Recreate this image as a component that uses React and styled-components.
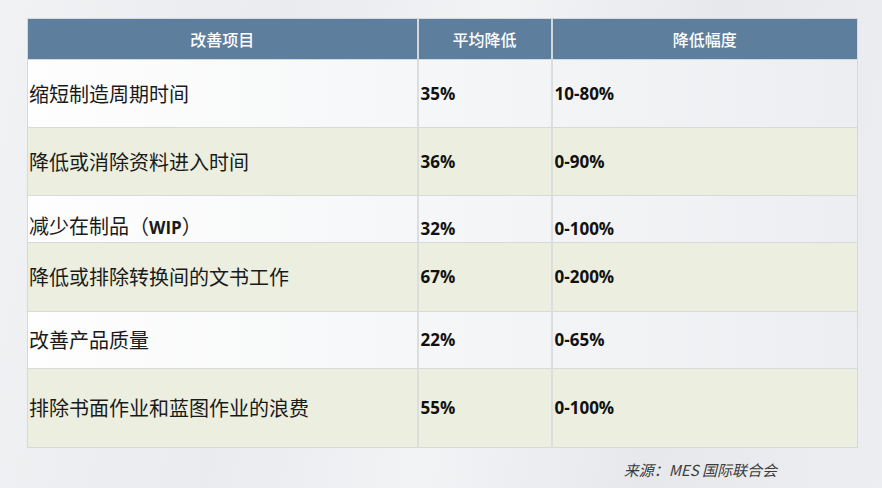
import React from "react";
import styled, { createGlobalStyle } from "styled-components";

const GlobalStyle = createGlobalStyle`
  html, body { margin: 0; padding: 0; }
  body {
    width: 882px;
    height: 488px;
    overflow: hidden;
    font-family: "Noto Sans CJK SC", "Noto Sans", sans-serif;
    background: linear-gradient(100deg, #f1f2f4 0%, #e9ebee 30%, #f2f3f5 52%, #e6e8ec 75%, #eceef1 100%);
  }
`;

const Page = styled.div`
  width: 882px;
  height: 488px;
  box-sizing: border-box;
  padding: 18px 25px 0 27px;
  display: flex;
  flex-direction: column;
`;

const Table = styled.table`
  width: 830px;
  table-layout: fixed;
  border-collapse: collapse;
  border: 1px solid #d6d8da;
`;

const HeadCell = styled.th`
  height: 40px;
  padding: 0;
  background: #5e7e9d;
  color: #ffffff;
  font-family: "Noto Sans CJK SC", sans-serif;
  font-weight: 500;
  font-size: 16px;
  text-align: center;
  vertical-align: middle;
  border-left: 2px solid #d4d7db;
  &:first-child { border-left: none; }
`;

const Row = styled.tr`
  height: ${(p) => p.$h}px;
  background: ${(p) =>
    p.$green
      ? "#ecefdf"
      : "linear-gradient(90deg, #fefefe 0%, #f6f7f8 45%, #eceef1 100%)"};
  border-top: 1px solid #d8d9da;
`;

const Cell = styled.td`
  padding: ${(p) => (p.$end ? "0 0 2px 2px" : "0 0 0 2px")};
  vertical-align: ${(p) => (p.$end ? "bottom" : "middle")};
  border-left: 2px solid #dcdddf;
  color: #111;
  font-family: "Open Sans", "Noto Sans", sans-serif;
  font-weight: 700;
  font-size: 17px;
  line-height: 22px;
`;

const NameCell = styled.td`
  padding: ${(p) => (p.$end ? "0 0 1px 1px" : "0 0 0 1px")};
  vertical-align: ${(p) => (p.$end ? "bottom" : "middle")};
  color: #1a1a1a;
  font-family: "Noto Sans CJK SC", sans-serif;
  font-weight: 400;
  font-size: 20px;
  line-height: 26px;
`;

const Latin = styled.span`
  font-family: "Open Sans", sans-serif;
  font-weight: 700;
  font-size: 17px;
`;

const Source = styled.div`
  display: flex;
  justify-content: flex-end;
  padding-right: 80px;
  margin-top: 12px;
  color: #3c3c3c;
  font-family: "Noto Sans CJK SC", sans-serif;
  font-style: italic;
  font-size: 15px;
  line-height: 20px;
`;

const rows = [
  { name: "缩短制造周期时间", avg: "35%", range: "10-80%", h: 68 },
  { name: "降低或消除资料进入时间", avg: "36%", range: "0-90%", h: 68, green: true },
  { name: "减少在制品（", latin: "WIP", tail: "）", avg: "32%", range: "0-100%", h: 47, end: true },
  { name: "降低或排除转换间的文书工作", avg: "67%", range: "0-200%", h: 69, green: true },
  { name: "改善产品质量", avg: "22%", range: "0-65%", h: 57 },
  { name: "排除书面作业和蓝图作业的浪费", avg: "55%", range: "0-100%", h: 79, green: true },
];

export default function App() {
  return (
    <>
      <GlobalStyle />
      <Page>
        <Table>
          <colgroup>
            <col style={{ width: 390 }} />
            <col style={{ width: 134 }} />
            <col style={{ width: 306 }} />
          </colgroup>
          <thead>
            <tr>
              <HeadCell>改善项目</HeadCell>
              <HeadCell>平均降低</HeadCell>
              <HeadCell>降低幅度</HeadCell>
            </tr>
          </thead>
          <tbody>
            {rows.map((r) => (
              <Row key={r.name} $h={r.h} $green={r.green}>
                <NameCell $end={r.end}>
                  {r.name}
                  {r.latin && <Latin>{r.latin}</Latin>}
                  {r.tail}
                </NameCell>
                <Cell $end={r.end}>{r.avg}</Cell>
                <Cell $end={r.end}>{r.range}</Cell>
              </Row>
            ))}
          </tbody>
        </Table>
        <Source>来源：MES 国际联合会</Source>
      </Page>
    </>
  );
}
